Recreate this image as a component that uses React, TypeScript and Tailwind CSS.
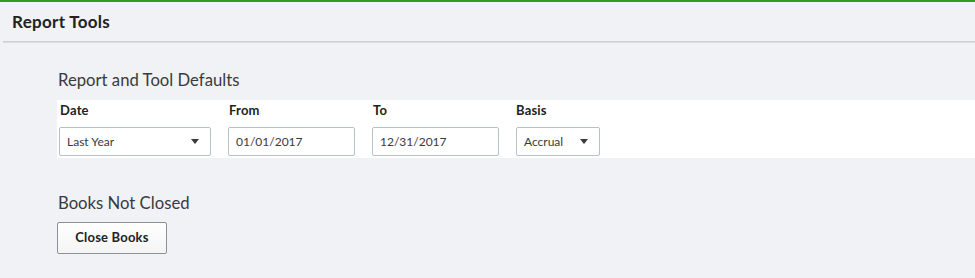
import React from "react";

const Caret = () => (
  <svg width="8" height="5" viewBox="0 0 8 5" className="shrink-0">
    <path d="M0 0h8L4 5z" fill="#393a3d" />
  </svg>
);

export default function App() {
  return (
    <div
      className="w-[975px] h-[278px] bg-[#f1f2f6] border-t-2 border-[#2ca01c] text-[#393a3d] overflow-hidden"
      style={{ fontFamily: "Lato, 'Open Sans', sans-serif" }}
    >
      <div className="h-[39px] flex items-center pl-[12px]">
        <h1 className="text-[17px] font-bold tracking-[0.3px] text-[#222]">Report Tools</h1>
      </div>
      <div className="ml-[3px] h-[2px] bg-[#cfd0d3] border-b border-[#dcdde0]" />
      <div className="pl-[57px] pt-[27px]">
        <div className="pl-[1px] text-[16.7px] leading-[20px] text-[#393a3d]">Report and Tool Defaults</div>
        <div className="mt-[10px] h-[58px] bg-white flex gap-[17px] pl-[2px] pt-[2px]">
          <div className="flex flex-col">
            <span className="pl-[1px] text-[13px] tracking-[0.2px] font-bold leading-[16px] text-[#222]">Date</span>
            <div className="mt-[9px] w-[152px] h-[29px] border border-[#babec5] rounded-[2px] bg-white flex items-center justify-between pl-[7px] pr-[11px]">
              <span className="text-[12px]">Last Year</span>
              <Caret />
            </div>
          </div>
          <div className="flex flex-col">
            <span className="pl-[1px] text-[13px] tracking-[0.2px] font-bold leading-[16px] text-[#222]">From</span>
            <div className="mt-[9px] w-[127px] h-[29px] border border-[#babec5] rounded-[2px] bg-white flex items-center pl-[7px]">
              <span className="text-[12px]">01/01/2017</span>
            </div>
          </div>
          <div className="flex flex-col">
            <span className="pl-[1px] text-[13px] tracking-[0.2px] font-bold leading-[16px] text-[#222]">To</span>
            <div className="mt-[9px] w-[127px] h-[29px] border border-[#babec5] rounded-[2px] bg-white flex items-center pl-[7px]">
              <span className="text-[12px]">12/31/2017</span>
            </div>
          </div>
          <div className="flex flex-col">
            <span className="text-[13px] tracking-[0.2px] font-bold leading-[16px] text-[#222]">Basis</span>
            <div className="mt-[9px] w-[84px] h-[29px] border border-[#babec5] rounded-[2px] bg-white flex items-center justify-between pl-[7px] pr-[11px]">
              <span className="text-[12px]">Accrual</span>
              <Caret />
            </div>
          </div>
        </div>
        <div className="mt-[35px] pl-[1px] text-[16.7px] leading-[20px] text-[#393a3d]">Books Not Closed</div>
        <button className="mt-[9px] w-[110px] h-[32px] border border-[#8d9096] rounded-[2px] bg-gradient-to-b from-white to-[#f4f4f4] text-[13px] tracking-[0.2px] font-bold text-[#222]">
          Close Books
        </button>
      </div>
    </div>
  );
}
